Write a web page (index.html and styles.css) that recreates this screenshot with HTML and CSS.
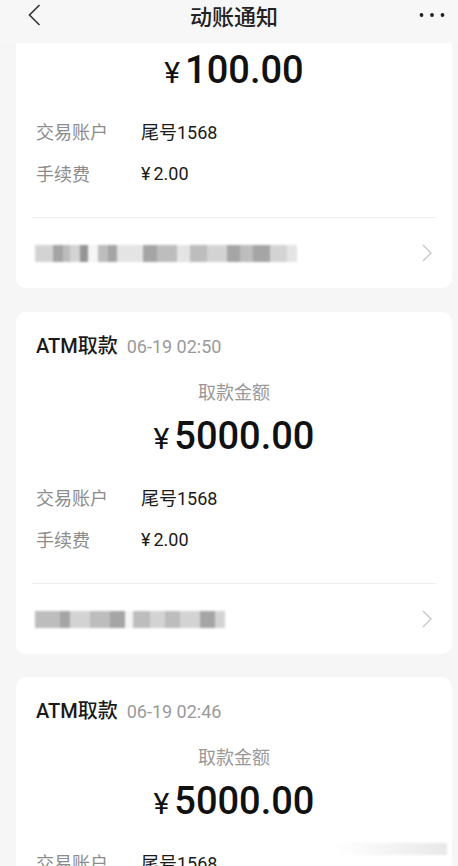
FILE: index.html
```html
<!DOCTYPE html>
<html lang="zh-CN">
<head>
    <meta charset="UTF-8">
    <meta name="viewport" content="width=device-width, initial-scale=1.0">
    <title>动账通知</title>
    <link rel="stylesheet" href="styles.css">
</head>
<body>
    <div class="nav">
        <span class="nav-back">
            <svg width="13" height="22" viewBox="0 0 13 22"><path d="M11.5 1 L1.5 11 L11.5 21" fill="none" stroke="#333" stroke-width="1.6"/></svg>
        </span>
        <div class="nav-title">动账通知</div>
        <span class="nav-more">
            <svg width="26" height="6" viewBox="0 0 26 6"><circle cx="2.5" cy="3" r="1.9" fill="#222"/><circle cx="13" cy="3" r="1.9" fill="#222"/><circle cx="23.5" cy="3" r="1.9" fill="#222"/></svg>
        </span>
    </div>

    <div class="list">
        <!-- 第一条只露出下半部分 -->
        <div class="card card-first">
            <div class="amount"><span class="yen">¥</span>100.00</div>
            <div class="info">
                <div class="info-row"><span class="label">交易账户</span><span class="value">尾号1568</span></div>
                <div class="info-row"><span class="label">手续费</span><span class="value"><span class="yen-s">¥</span>2.00</span></div>
            </div>
            <div class="link-row">
                <div class="mosaic">
                    <span class="m2" style="width:18px"></span>
                    <span class="m4" style="width:10px"></span>
                    <span class="m3" style="width:7px"></span>
                    <span class="m2" style="width:10px"></span>
                    <span class="m5" style="width:8px"></span>
                    <span class="m0" style="width:10px"></span>
                    <span class="m3" style="width:10px"></span>
                    <span class="m4" style="width:9px"></span>
                    <span class="m1" style="width:26px"></span>
                    <span class="m4" style="width:14px"></span>
                    <span class="m3" style="width:20px"></span>
                    <span class="m1" style="width:13px"></span>
                    <span class="m3" style="width:17px"></span>
                    <span class="m2" style="width:20px"></span>
                    <span class="m4" style="width:13px"></span>
                    <span class="m3" style="width:13px"></span>
                    <span class="m4" style="width:17px"></span>
                    <span class="m2" style="width:17px"></span>
                    <span class="m1" style="width:10px"></span>
                </div>
                <svg class="arrow" width="10" height="18" viewBox="0 0 10 18"><path d="M1 1 L9 9 L1 17" fill="none" stroke="#c8c8c8" stroke-width="1.4"/></svg>
            </div>
        </div>

        <div class="card">
            <div class="card-head"><span class="type">ATM取款</span><span class="time">06-19 02:50</span></div>
            <div class="amount-label">取款金额</div>
            <div class="amount"><span class="yen">¥</span>5000.00</div>
            <div class="info">
                <div class="info-row"><span class="label">交易账户</span><span class="value">尾号1568</span></div>
                <div class="info-row"><span class="label">手续费</span><span class="value"><span class="yen-s">¥</span>2.00</span></div>
            </div>
            <div class="link-row">
                <div class="mosaic">
                    <span class="m3" style="width:25px"></span>
                    <span class="m4" style="width:10px"></span>
                    <span class="m2" style="width:20px"></span>
                    <span class="m3" style="width:20px"></span>
                    <span class="m4" style="width:15px"></span>
                    <span class="m0" style="width:8px"></span>
                    <span class="m3" style="width:17px"></span>
                    <span class="m2" style="width:15px"></span>
                    <span class="m3" style="width:15px"></span>
                    <span class="m2" style="width:20px"></span>
                    <span class="m4" style="width:15px"></span>
                    <span class="m2" style="width:10px"></span>
                </div>
                <svg class="arrow" width="10" height="18" viewBox="0 0 10 18"><path d="M1 1 L9 9 L1 17" fill="none" stroke="#c8c8c8" stroke-width="1.4"/></svg>
            </div>
        </div>

        <div class="card">
            <div class="card-head"><span class="type">ATM取款</span><span class="time">06-19 02:46</span></div>
            <div class="amount-label">取款金额</div>
            <div class="amount"><span class="yen">¥</span>5000.00</div>
            <div class="info">
                <div class="info-row"><span class="label">交易账户</span><span class="value">尾号1568</span></div>
                <div class="info-row"><span class="label">手续费</span><span class="value"><span class="yen-s">¥</span>2.00</span></div>
            </div>
        </div>
    </div>

    <div class="watermark"></div>
</body>
</html>
```

FILE: styles.css
```css
body {
    margin: 0;
    padding: 0;
    height: 866px;
    overflow: hidden;
    background: #f6f6f6;
    font-family: Roboto, "Noto Sans CJK SC", sans-serif;
    color: #1a1a1a;
}
.nav {
    height: 43px;
    display: grid;
    grid-template-columns: 1fr auto 1fr;
    align-items: center;
    padding: 0 13px 0 23px;
    background: #f7f7f7;
}
.nav-back {
    display: flex;
    margin-left: 5px;
    margin-top: -14px;
}
.nav-title {
    font-size: 22px;
    font-weight: 500;
    color: #222;
    margin-top: -14px;
}
.nav-more {
    display: flex;
    justify-content: flex-end;
    margin-top: -14px;
}
.list {
    display: flex;
    flex-direction: column;
    gap: 23px;
}
.card {
    background: #fff;
    border-radius: 10px;
    margin: 0 6px 0 16px;
    padding: 0 20px;
}
.card-first {
    border-radius: 0 0 10px 10px;
    padding-top: 5px;
    margin-bottom: 1px;
}
.card-head {
    display: flex;
    align-items: baseline;
    padding-top: 20px;
    height: 28px;
    line-height: 28px;
}
.type {
    font-size: 20px;
    font-weight: 500;
}
.time {
    font-size: 18px;
    color: #9a9a9a;
    margin-left: 9px;
}
.amount-label {
    margin-top: 21px;
    height: 24px;
    line-height: 24px;
    font-size: 18px;
    color: #999;
    text-align: center;
}
.amount {
    margin-top: 9px;
    height: 44px;
    display: flex;
    justify-content: center;
    align-items: baseline;
    line-height: 44px;
    font-size: 38px;
    font-weight: 500;
    color: #111;
}
.card-first .amount {
    margin-top: 0;
}
.yen {
    font-size: 30px;
    font-weight: 400;
    margin-right: 5px;
}
.yen-s {
    margin-right: 3px;
}
.info {
    margin-top: 18px;
}
.info-row {
    display: flex;
    align-items: center;
    height: 42px;
    font-size: 18px;
}
.label {
    width: 105px;
    color: #8c8c8c;
}
.value {
    color: #1a1a1a;
}
.link-row {
    margin: 23px -4px 0;
    border-top: 1px solid #efefef;
    height: 70px;
    display: flex;
    align-items: center;
    justify-content: space-between;
    padding: 0 0 0 3px;
}
.mosaic {
    display: flex;
    height: 17px;
    filter: blur(1px);
    opacity: 0.9;
}
.mosaic span {
    display: block;
    height: 100%;
}
.m0 { background: #f4f4f4; }
.m1 { background: #e2e2e2; }
.m2 { background: #cfcfcf; }
.m3 { background: #b6b6b6; }
.m4 { background: #9c9c9c; }
.m5 { background: #8a8a8a; }
.arrow {
    margin-right: 4px;
}
.watermark {
    position: absolute;
    left: 335px;
    top: 843px;
    width: 112px;
    height: 12px;
    background: linear-gradient(90deg, rgba(200, 200, 200, 0), rgba(190, 190, 190, 0.35));
    filter: blur(1px);
}
```
